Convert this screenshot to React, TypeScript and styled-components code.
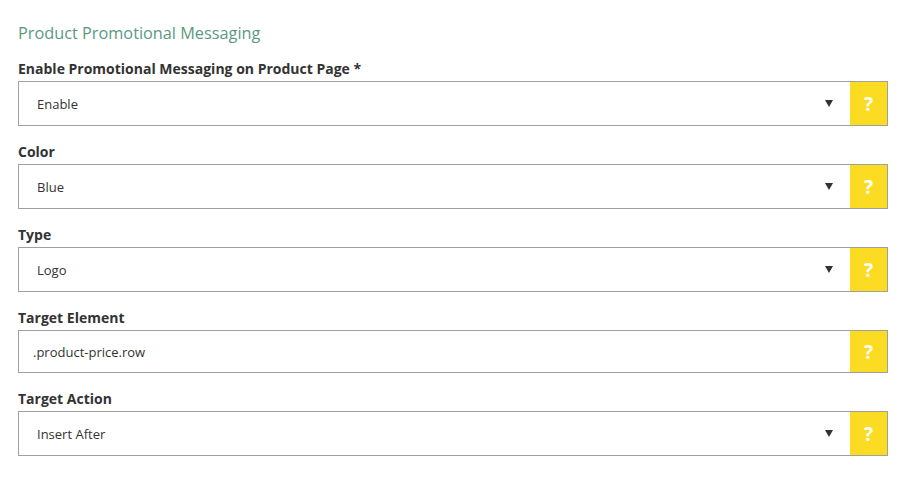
import React from "react";
import styled, { createGlobalStyle } from "styled-components";

const Global = createGlobalStyle`
  html, body { margin: 0; padding: 0; background: #fff; }
  body { font-family: "Open Sans", "DejaVu Sans", sans-serif; }
`;

const Page = styled.div`
  width: 908px;
  height: 500px;
  box-sizing: border-box;
  padding: 22px 20px 0 18px;
`;

const Title = styled.h2`
  margin: 0 0 15px;
  font-size: 16.3px;
  font-weight: 400;
  color: #5b9a80;
  line-height: 22px;
`;

const Field = styled.div`
  display: flex;
  flex-direction: column;
  margin-bottom: 16px;
`;

const Label = styled.label`
  font-size: 14px;
  font-weight: 700;
  color: #333;
  line-height: 20px;
  margin-bottom: 2px;
`;

const Box = styled.div<{ $h: number }>`
  display: flex;
  height: ${(p) => p.$h}px;
  box-sizing: border-box;
  border: 1px solid #a0a0a0;
  background: #fff;
`;

const Value = styled.div<{ $pad: number }>`
  flex: 1;
  display: flex;
  align-items: center;
  justify-content: space-between;
  padding: 0 17px 0 ${(p) => p.$pad}px;
  font-size: 13px;
  color: #333;
`;

const Arrow = styled.span`
  width: 0;
  height: 0;
  border-left: 4px solid transparent;
  border-right: 4px solid transparent;
  border-top: 7px solid #333;
`;

const Help = styled.div`
  width: 37px;
  background: #fcdc22;
  color: #fff;
  display: flex;
  align-items: center;
  justify-content: center;
  font-weight: 700;
  font-size: 19px;
`;

const fields = [
  { label: "Enable Promotional Messaging on Product Page *", value: "Enable", select: true },
  { label: "Color", value: "Blue", select: true },
  { label: "Type", value: "Logo", select: true },
  { label: "Target Element", value: ".product-price.row", select: false },
  { label: "Target Action", value: "Insert After", select: true },
];

export default function App() {
  return (
    <Page>
      <Global />
      <Title>Product Promotional Messaging</Title>
      {fields.map((f) => (
        <Field key={f.label}>
          <Label>{f.label}</Label>
          <Box $h={f.select ? 45 : 43}>
            <Value $pad={f.select ? 18 : 14}>
              <span>{f.value}</span>
              {f.select && <Arrow />}
            </Value>
            <Help>?</Help>
          </Box>
        </Field>
      ))}
    </Page>
  );
}
